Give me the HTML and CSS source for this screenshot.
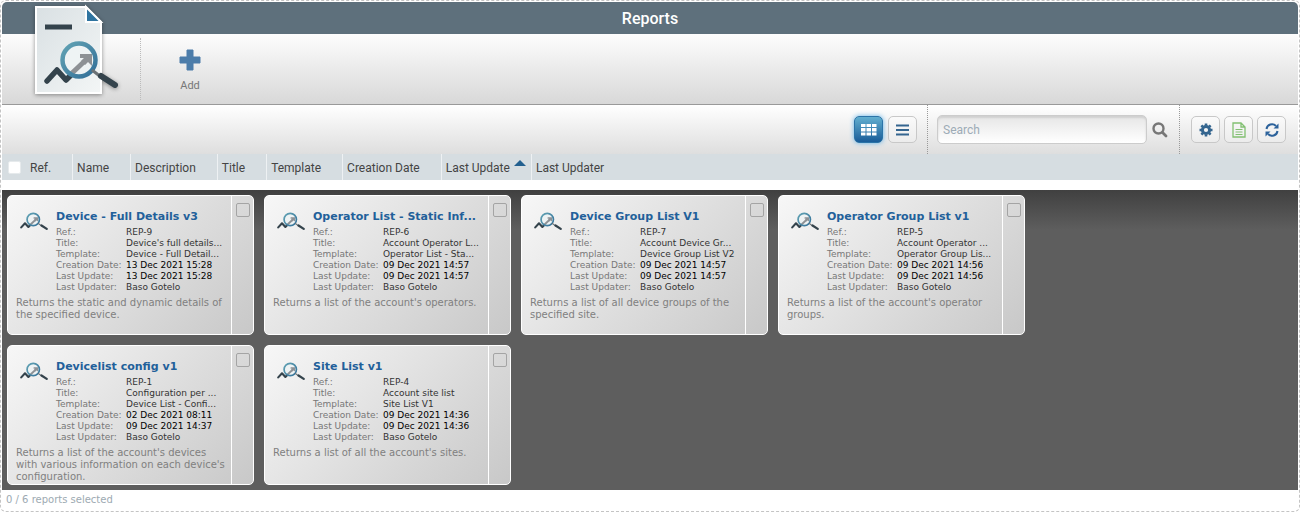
FILE: index.html
```html
<!DOCTYPE html>
<html lang="en">
<head>
    <meta charset="UTF-8">
    <meta name="viewport" content="width=device-width, initial-scale=1.0">
    <title>Reports</title>
    <link rel="stylesheet" href="styles.css">
</head>
<body>

<!-- Shared drawings -->
<svg class="defs" aria-hidden="true">
    <defs>
        <linearGradient id="lens" x1="0" y1="0" x2="1" y2="1">
            <stop offset="0" stop-color="#62a3b4"/>
            <stop offset="1" stop-color="#326f98"/>
        </linearGradient>
        <linearGradient id="paper" x1="0" y1="0" x2="1" y2="1">
            <stop offset="0" stop-color="#d9e0e3"/>
            <stop offset="1" stop-color="#f3f6f6"/>
        </linearGradient>
        <symbol id="report" viewBox="0 0 74 48">
            <path d="M3 41l10-11 9 10 6-6" fill="none" stroke="#34434c" stroke-width="5.500" stroke-linejoin="round" stroke-linecap="round"/>
            <circle cx="35" cy="20" r="16" fill="#eef3f4"/>
            <path d="M27 34L44 18" stroke="#8d9195" stroke-width="5"/>
            <path d="M36 14h12v12l-4-4-3 3-4-4 3-3h-4z" fill="#8d9195"/>
            <circle cx="35" cy="20" r="16.500" fill="none" stroke="url(#lens)" stroke-width="4.500"/>
            <path d="M48 30l9 7" stroke="#6b7276" stroke-width="3"/>
            <path d="M57 36l14 9" stroke="#34434c" stroke-width="6" stroke-linecap="round"/>
        </symbol>
    </defs>
</svg>

<div class="window">
    <header class="titlebar">
        <h1>Reports</h1>
    </header>

    <div class="ribbon">
        <div class="ribbon-logo">
            <svg class="logo" width="90" height="98" viewBox="0 0 90 98">
                <path d="M4 3h50l15 15v71H4z" fill="url(#paper)" stroke="#fff" stroke-width="2"/>
                <path d="M54 3v15h15z" fill="#2f74a0" stroke="#fff" stroke-width="2"/>
                <path d="M13 23h27" stroke="#34434c" stroke-width="5"/>
                <use href="#report" x="12" y="36" width="74" height="48"/>
            </svg>
        </div>
        <button class="add" type="button">
            <svg width="22" height="22" viewBox="0 0 22 22"><path d="M8 1h6v7h7v6h-7v7H8v-7H1V8h7z" fill="#4c7daa" stroke="#4c7daa" stroke-linejoin="round"/></svg>
            <span>Add</span>
        </button>
    </div>

    <div class="toolbar">
        <div class="group views">
            <button class="tool active" type="button" aria-label="Grid view">
                <svg width="16" height="14" viewBox="0 0 16 14" fill="#fff"><path d="M0 1h4.500v3H0zM5.500 1h4.500v3H5.500zM11 1h4.500v3H11zM0 5h4.500v3.500H0zM5.500 5h4.500v3.500H5.500zM11 5h4.500v3.500H11zM0 9.500h4.500v3H0zM5.500 9.500h4.500v3H5.500zM11 9.500h4.500v3H11z"/></svg>
            </button>
            <button class="tool" type="button" aria-label="List view">
                <svg width="14" height="12" viewBox="0 0 14 12"><path d="M0 1.500h13M0 6h13M0 10.500h13" stroke="#34658f" stroke-width="2"/></svg>
            </button>
        </div>
        <form class="group search">
            <input type="text" placeholder="Search" aria-label="Search">
            <button type="button" class="find" aria-label="Find">
                <svg width="16" height="16" viewBox="0 0 16 16" fill="none" stroke="#777"><circle cx="6.500" cy="6.500" r="5" stroke-width="2.400"/><path d="M10.500 10.500L14 14" stroke-width="2.800" stroke-linecap="round"/></svg>
            </button>
        </form>
        <div class="group actions">
            <button class="tool" type="button" aria-label="Settings">
                <svg width="14" height="14" viewBox="0 0 14 14" fill="none" stroke="#34658f"><circle cx="7" cy="7" r="3.600" stroke-width="3"/><path d="M7 .5v2M7 11.500v2M.5 7h2M11.500 7h2M2.400 2.400l1.400 1.400M10.200 10.200l1.400 1.400M11.600 2.400l-1.400 1.400M3.800 10.200l-1.400 1.400" stroke-width="2.600"/></svg>
            </button>
            <button class="tool" type="button" aria-label="Export">
                <svg width="14" height="16" viewBox="0 0 14 16" fill="none" stroke="#82c072"><path d="M1 1h8l4 4v10H1zM9 1v4h4" stroke-width="1.300"/><path d="M3.500 7.500h7M3.500 10h7M3.500 12.500h7"/></svg>
            </button>
            <button class="tool" type="button" aria-label="Refresh">
                <svg width="14" height="14" viewBox="0 0 14 14"><path d="M1.500 6a5.500 5.500 0 0 1 9.500-3M12.500 8a5.500 5.500 0 0 1-9.500 3" fill="none" stroke="#2c629b" stroke-width="2"/><path d="M13.500.5v5h-5zM.5 13.500v-5h5z" fill="#2c629b"/></svg>
            </button>
        </div>
    </div>

    <div class="columns">
        <input type="checkbox" aria-label="Select all">
        <button type="button">Ref.</button>
        <button type="button">Name</button>
        <button type="button">Description</button>
        <button type="button">Title</button>
        <button type="button">Template</button>
        <button type="button">Creation Date</button>
        <button type="button" class="sorted">Last Update</button>
        <button type="button">Last Updater</button>
    </div>

    <main class="cards">
        <article class="card">
            <div class="card-body">
                <svg class="card-icon"><use href="#report"/></svg>
                <div class="info">
                    <h2>Device - Full Details v3</h2>
                    <dl>
                        <dt>Ref.:</dt><dd>REP-9</dd>
                        <dt>Title:</dt><dd>Device's full details...</dd>
                        <dt>Template:</dt><dd>Device - Full Detail...</dd>
                        <dt>Creation Date:</dt><dd class="date">13 Dec 2021 15:28</dd>
                        <dt>Last Update:</dt><dd class="date">13 Dec 2021 15:28</dd>
                        <dt>Last Updater:</dt><dd>Baso Gotelo</dd>
                    </dl>
                </div>
                <p>Returns the static and dynamic details of the specified device.</p>
            </div>
            <div class="card-side"><input type="checkbox" aria-label="Select REP-9"></div>
        </article>

        <article class="card">
            <div class="card-body">
                <svg class="card-icon"><use href="#report"/></svg>
                <div class="info">
                    <h2>Operator List - Static Inf...</h2>
                    <dl>
                        <dt>Ref.:</dt><dd>REP-6</dd>
                        <dt>Title:</dt><dd>Account Operator L...</dd>
                        <dt>Template:</dt><dd>Operator List - Sta...</dd>
                        <dt>Creation Date:</dt><dd class="date">09 Dec 2021 14:57</dd>
                        <dt>Last Update:</dt><dd class="date">09 Dec 2021 14:57</dd>
                        <dt>Last Updater:</dt><dd>Baso Gotelo</dd>
                    </dl>
                </div>
                <p>Returns a list of the account's operators.</p>
            </div>
            <div class="card-side"><input type="checkbox" aria-label="Select REP-6"></div>
        </article>

        <article class="card">
            <div class="card-body">
                <svg class="card-icon"><use href="#report"/></svg>
                <div class="info">
                    <h2>Device Group List V1</h2>
                    <dl>
                        <dt>Ref.:</dt><dd>REP-7</dd>
                        <dt>Title:</dt><dd>Account Device Gr...</dd>
                        <dt>Template:</dt><dd>Device Group List V2</dd>
                        <dt>Creation Date:</dt><dd class="date">09 Dec 2021 14:57</dd>
                        <dt>Last Update:</dt><dd class="date">09 Dec 2021 14:57</dd>
                        <dt>Last Updater:</dt><dd>Baso Gotelo</dd>
                    </dl>
                </div>
                <p>Returns a list of all device groups of the specified site.</p>
            </div>
            <div class="card-side"><input type="checkbox" aria-label="Select REP-7"></div>
        </article>

        <article class="card">
            <div class="card-body">
                <svg class="card-icon"><use href="#report"/></svg>
                <div class="info">
                    <h2>Operator Group List v1</h2>
                    <dl>
                        <dt>Ref.:</dt><dd>REP-5</dd>
                        <dt>Title:</dt><dd>Account Operator ...</dd>
                        <dt>Template:</dt><dd>Operator Group Lis...</dd>
                        <dt>Creation Date:</dt><dd class="date">09 Dec 2021 14:56</dd>
                        <dt>Last Update:</dt><dd class="date">09 Dec 2021 14:56</dd>
                        <dt>Last Updater:</dt><dd>Baso Gotelo</dd>
                    </dl>
                </div>
                <p>Returns a list of the account's operator groups.</p>
            </div>
            <div class="card-side"><input type="checkbox" aria-label="Select REP-5"></div>
        </article>

        <article class="card">
            <div class="card-body">
                <svg class="card-icon"><use href="#report"/></svg>
                <div class="info">
                    <h2>Devicelist config v1</h2>
                    <dl>
                        <dt>Ref.:</dt><dd>REP-1</dd>
                        <dt>Title:</dt><dd>Configuration per ...</dd>
                        <dt>Template:</dt><dd>Device List - Confi...</dd>
                        <dt>Creation Date:</dt><dd class="date">02 Dec 2021 08:11</dd>
                        <dt>Last Update:</dt><dd class="date">09 Dec 2021 14:37</dd>
                        <dt>Last Updater:</dt><dd>Baso Gotelo</dd>
                    </dl>
                </div>
                <p>Returns a list of the account's devices with various information on each device's configuration.</p>
            </div>
            <div class="card-side"><input type="checkbox" aria-label="Select REP-1"></div>
        </article>

        <article class="card">
            <div class="card-body">
                <svg class="card-icon"><use href="#report"/></svg>
                <div class="info">
                    <h2>Site List v1</h2>
                    <dl>
                        <dt>Ref.:</dt><dd>REP-4</dd>
                        <dt>Title:</dt><dd>Account site list</dd>
                        <dt>Template:</dt><dd>Site List V1</dd>
                        <dt>Creation Date:</dt><dd class="date">09 Dec 2021 14:36</dd>
                        <dt>Last Update:</dt><dd class="date">09 Dec 2021 14:36</dd>
                        <dt>Last Updater:</dt><dd>Baso Gotelo</dd>
                    </dl>
                </div>
                <p>Returns a list of all the account's sites.</p>
            </div>
            <div class="card-side"><input type="checkbox" aria-label="Select REP-4"></div>
        </article>
    </main>

    <footer class="status">0 / 6 reports selected</footer>
</div>

</body>
</html>
```
FILE: styles.css
```css
* {
    box-sizing: border-box;
}
body {
    margin: 0;
    background: #fff;
    font-family: "DejaVu Sans", Verdana, sans-serif;
    font-size: 9px;
}
button {
    font-family: Roboto, sans-serif;
    padding: 0;
    border: none;
    background: none;
    cursor: pointer;
}
svg {
    display: block;
}
.defs {
    position: absolute;
    width: 0;
    height: 0;
}
.window {
    border: 1px dashed #c4c4c4;
    border-radius: 6px;
    padding: 1px;
}

/* Title */
.titlebar {
    height: 32px;
    background: #5e707c;
    border-radius: 5px 5px 0 0;
}
.titlebar h1 {
    margin: 0;
    color: #fff;
    font: 500 16px/34px Roboto, sans-serif;
    text-align: center;
}

/* Ribbon */
.ribbon {
    display: flex;
    height: 71px;
    padding: 4px 0;
    border-bottom: 1px solid #999;
    background: linear-gradient(#fdfdfd, #d8d8d8);
}
.ribbon-logo {
    width: 139px;
    padding-left: 30px;
    border-right: 1px dotted #bbb;
}
.logo {
    margin-top: -34px;
    filter: drop-shadow(0 1px 2px rgba(0, 0, 0, .4));
}
.add {
    display: flex;
    flex-direction: column;
    align-items: center;
    justify-content: center;
    gap: 8px;
    width: 98px;
    padding-top: 2px;
    color: #777;
    font-size: 11px;
}

/* Toolbar */
.toolbar {
    display: flex;
    justify-content: flex-end;
    height: 49px;
    background: linear-gradient(#fff, #dedede);
}
.group {
    display: flex;
    align-items: center;
    gap: 5px;
    padding: 0 10px;
}
.group + .group {
    border-left: 1px dotted #999;
}
.tool {
    display: flex;
    align-items: center;
    justify-content: center;
    width: 29px;
    height: 27px;
    border: 1px solid #c8c8c8;
    border-radius: 5px;
    background: linear-gradient(#fafafa, #ececec);
}
.tool.active {
    border-color: #2b74a8;
    background: linear-gradient(#62afd0, #195c98);
    box-shadow: 0 0 5px #62b4ea;
}
.actions {
    gap: 4px;
    padding: 0 12px 0 11px;
}
.search {
    padding: 0 11px 0 9px;
}
.search input {
    width: 210px;
    height: 29px;
    padding: 0 5px;
    border: 1px solid #ccc;
    border-radius: 5px;
    background: linear-gradient(#e6e6e6, #fff);
    box-shadow: inset 0 2px 2px #d0d0d0;
    font: 12px Roboto, sans-serif;
}
.search input::placeholder {
    color: #9dabb6;
}

/* Column headings */
.columns {
    display: flex;
    align-items: stretch;
    height: 26px;
    background: #d6dde1;
    margin-bottom: 10px;
}
.columns input {
    appearance: none;
    width: 13px;
    height: 13px;
    margin: 7px 4px 0 6px;
    border: 1px solid #e6eaec;
    border-radius: 2px;
    background: #fff;
}
.columns button {
    padding: 2px 21px 0 4px;
    border-left: 1px solid #eef1f3;
    color: #444;
    font-size: 12px;
}
.columns input + button {
    border-left-color: transparent;
}
.columns .sorted {
    position: relative;
}
.sorted::after {
    content: "";
    position: absolute;
    top: 6px;
    right: 5px;
    border: 6px solid transparent;
    border-top: 0;
    border-bottom-color: #22608f;
}

/* Cards */
.cards {
    display: grid;
    grid-template-columns: repeat(auto-fill, 247px);
    gap: 10px;
    align-content: start;
    padding: 5px 250px 5px 5px;
    background: linear-gradient(#404040, #5e5e5e 40px);
}
.card {
    display: flex;
    height: 140px;
    border: 1px solid #fff;
    border-radius: 5px;
    background: linear-gradient(135deg, #f7f7f7, #c8c8c8);
}
.card-body {
    display: grid;
    grid-template-columns: 40px 1fr;
    align-content: start;
    flex: 1;
    min-width: 0;
    padding: 13px 3px 0 8px;
}
.card-icon {
    width: 28px;
    height: 18px;
    margin: 3px 0 0 4px;
}
.info h2 {
    margin: 0;
    color: #22609a;
    font-size: 11px;
    line-height: 16px;
    white-space: nowrap;
}
.info dl {
    display: grid;
    grid-template-columns: 70px 1fr;
    margin: 2px 0 4px;
    line-height: 11px;
    white-space: nowrap;
}
.info dt {
    color: #777;
}
.info dd {
    margin: 0;
    color: #333;
}
.info .date {
    color: #000;
}
.card p {
    grid-column: 1 / 3;
    margin: 0;
    color: #808080;
    font-size: 10px;
    line-height: 12px;
}
.card-side {
    width: 22px;
    padding: 7px 0 0 4px;
    border-left: 1px solid #fff;
}
.card-side input {
    appearance: none;
    display: block;
    width: 14px;
    height: 14px;
    margin: 0;
    border: 1px solid #a4a4a4;
    border-radius: 2px;
}

.status {
    padding: 0 4px;
    color: #9daab2;
    font-size: 10px;
    line-height: 20px;
}
```
